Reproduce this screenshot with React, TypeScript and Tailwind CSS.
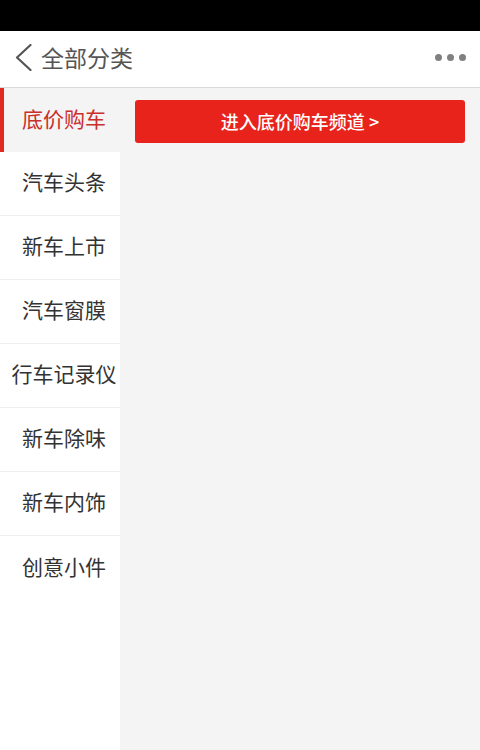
const categories = ['底价购车', '汽车头条', '新车上市', '汽车窗膜', '行车记录仪', '新车除味', '新车内饰', '创意小件'];

export default function App() {
  const active = 0;

  return (
    <div
      className="w-[480px] h-[750px] flex flex-col bg-white overflow-hidden"
      style={{ fontFamily: '"Noto Sans CJK SC", "Noto Sans", sans-serif' }}
    >
      <div className="h-[31px] bg-black shrink-0" />
      <header className="h-[57px] shrink-0 flex items-center justify-between pl-[15px] pr-[14px] pb-[3px] bg-white border-b border-[#d9d9d9]">
        <div className="flex items-center gap-[9px]">
          <svg width="17" height="27" viewBox="0 0 17 27" fill="none" className="text-[#555]">
            <polyline points="15.5,1 2,13.5 15.5,26" stroke="currentColor" strokeWidth="2.2" strokeLinecap="round" strokeLinejoin="round" />
          </svg>
          <span className="text-[23px] leading-none text-[#555]">全部分类</span>
        </div>
        <div className="flex items-center gap-[5px]">
          <span className="w-[7px] h-[7px] rounded-full bg-[#808080]" />
          <span className="w-[7px] h-[7px] rounded-full bg-[#808080]" />
          <span className="w-[7px] h-[7px] rounded-full bg-[#808080]" />
        </div>
      </header>
      <div className="flex flex-1 min-h-0">
        <nav className="w-[120px] shrink-0 bg-white flex flex-col">
          {categories.map((name, i) =>
            i === active ? (
              <div
                key={name}
                className="h-[64px] flex items-center justify-center bg-[#f4f4f4] border-l-[4px] border-[#e02a22] text-[21px] text-[#c9302c] pl-[4px] pb-[2px]"
              >
                {name}
              </div>
            ) : (
              <div
                key={name}
                className={`h-[64px] flex items-center justify-center text-[21px] text-[#333] whitespace-nowrap pl-[8px] pb-[3px] ${
                  i < categories.length - 1 ? 'border-b border-[#efefef]' : ''
                }`}
              >
                {name}
              </div>
            )
          )}
        </nav>
        <main className="flex-1 bg-[#f4f4f4] pt-[12px] pl-[15px] pr-[15px]">
          <button className="w-full h-[43px] rounded-[3px] bg-[#e8231c] text-white text-[18px] font-medium flex items-center justify-center">
            进入底价购车频道 &gt;
          </button>
        </main>
      </div>
    </div>
  );
}
